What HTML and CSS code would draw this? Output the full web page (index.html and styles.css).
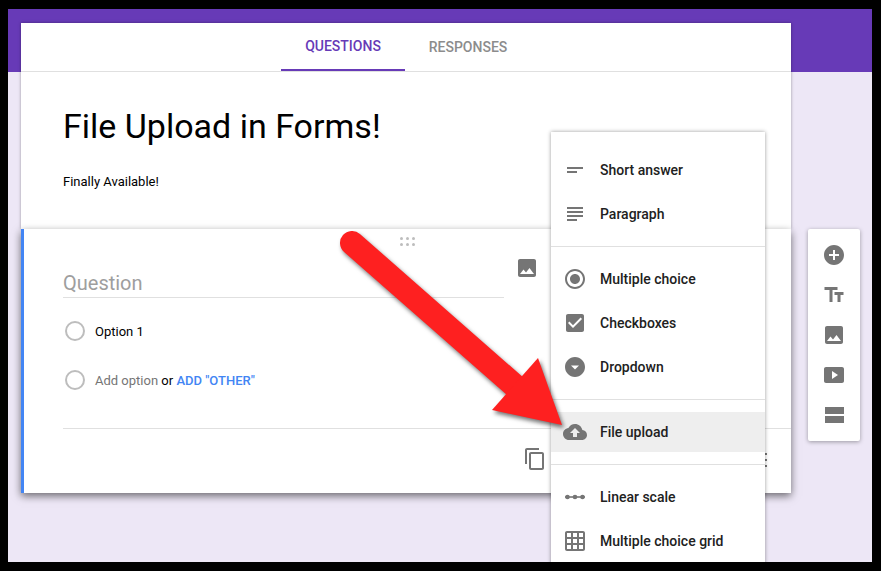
FILE: index.html
```html
<!DOCTYPE html>
<html lang="en">
<head>
  <meta charset="UTF-8">
  <meta name="viewport" content="width=device-width, initial-scale=1.0">
  <title>File Upload in Forms!</title>
  <link rel="stylesheet" href="styles.css">
</head>
<body>
  <svg class="defs" width="0" height="0">
    <symbol id="i-image" viewBox="0 0 24 24"><path d="M21 19V5c0-1.1-.9-2-2-2H5c-1.1 0-2 .9-2 2v14c0 1.100.9 2 2 2h14c1.100 0 2-.9 2-2zM8.500 13.500l2.500 3.010L14.500 12l4.500 6H5l3.500-4.500z"/></symbol>
  </svg>

  <div class="screen">
    <div class="layout">
      <main class="column">
        <section class="form-head">
          <nav class="tabs">
            <a class="tab active">QUESTIONS</a>
            <a class="tab">RESPONSES</a>
          </nav>
          <div class="form-title">
            <h1>File Upload in Forms!</h1>
            <p>Finally Available!</p>
          </div>
        </section>

        <section class="question-card">
          <div class="drag-handle"><i></i><i></i><i></i><i></i><i></i><i></i></div>
          <div class="question-row">
            <div class="question-input">Question</div>
            <svg class="icon"><use href="#i-image"/></svg>
          </div>
          <div class="option first"><span class="radio"></span><span>Option 1</span></div>
          <div class="option"><span class="radio"></span><span><span class="muted">Add option</span> or <a class="link">ADD "OTHER"</a></span></div>
          <div class="card-footer">
            <svg class="icon copy" viewBox="0 0 24 24"><path d="M16 1H4c-1.100 0-2 .9-2 2v14h2V3h12V1zm3 4H8c-1.100 0-2 .9-2 2v14c0 1.100.9 2 2 2h11c1.100 0 2-.9 2-2V7c0-1.100-.9-2-2-2zm0 16H8V7h11v14z"/></svg>
            <span class="more"><i></i><i></i><i></i></span>
          </div>
        </section>
      </main>

      <aside class="toolbar">
        <svg class="icon" viewBox="0 0 24 24"><path d="M12 2C6.480 2 2 6.480 2 12s4.480 10 10 10 10-4.480 10-10S17.520 2 12 2zm5 11h-4v4h-2v-4H7v-2h4V7h2v4h4v2z"/></svg>
        <svg class="icon" viewBox="0 0 24 24"><path d="M2.500 4v3h5v12h3V7h5V4h-13zm19 5h-9v3h3v7h3v-7h3V9z"/></svg>
        <svg class="icon"><use href="#i-image"/></svg>
        <svg class="icon" viewBox="0 0 24 24"><path fill-rule="evenodd" d="M20 4H4c-1.100 0-2 .9-2 2v12c0 1.100.9 2 2 2h16c1.100 0 2-.9 2-2V6c0-1.100-.9-2-2-2zm-10 12V8l6 4-6 4z"/></svg>
        <svg class="icon" viewBox="0 0 24 24"><path d="M3 4h19v7H3zM3 13h19v7H3z"/></svg>
      </aside>
    </div>

    <div class="type-menu">
      <div class="menu-group top">
        <div class="menu-item">
          <svg class="icon" viewBox="0 0 24 24"><path d="M4 9h16v2H4zm0 4h10v2H4z"/></svg>Short answer
        </div>
        <div class="menu-item">
          <svg class="icon" viewBox="0 0 24 24"><path d="M14 17H4v2h10v-2zm6-8H4v2h16V9zM4 15h16v-2H4v2zM4 5v2h16V5H4z"/></svg>Paragraph
        </div>
      </div>
      <div class="menu-group">
        <div class="menu-item">
          <svg class="icon" viewBox="0 0 24 24"><path d="M12 7c-2.760 0-5 2.240-5 5s2.240 5 5 5 5-2.240 5-5-2.240-5-5-5zm0-5C6.480 2 2 6.480 2 12s4.480 10 10 10 10-4.480 10-10S17.520 2 12 2zm0 18c-4.420 0-8-3.580-8-8s3.580-8 8-8 8 3.580 8 8-3.580 8-8 8z"/></svg>Multiple choice
        </div>
        <div class="menu-item">
          <svg class="icon" viewBox="0 0 24 24"><path d="M19 3H5c-1.110 0-2 .9-2 2v14c0 1.100.89 2 2 2h14c1.110 0 2-.9 2-2V5c0-1.100-.89-2-2-2zm-9 14l-5-5 1.410-1.410L10 14.170l7.590-7.590L19 8l-9 9z"/></svg>Checkboxes
        </div>
        <div class="menu-item">
          <svg class="icon" viewBox="0 0 24 24"><path fill-rule="evenodd" d="M12 2C6.480 2 2 6.480 2 12s4.480 10 10 10 10-4.480 10-10S17.520 2 12 2zM8 10.500h8l-4 4z"/></svg>Dropdown
        </div>
      </div>
      <div class="menu-group">
        <div class="menu-item selected">
          <svg class="icon" viewBox="0 0 24 24"><path d="M19.350 10.040C18.670 6.590 15.640 4 12 4 9.110 4 6.600 5.640 5.350 8.040 2.340 8.360 0 10.910 0 14c0 3.310 2.690 6 6 6h13c2.760 0 5-2.240 5-5 0-2.640-2.050-4.780-4.650-4.960zM14 13v4h-4v-4H7l5-5 5 5h-3z"/></svg>File upload
        </div>
      </div>
      <div class="menu-group last">
        <div class="menu-item">
          <svg class="icon" viewBox="0 0 24 24"><path d="M2 11.200h20v1.600H2z"/><circle cx="4.500" cy="12" r="2.300"/><circle cx="12" cy="12" r="2.300"/><circle cx="19.500" cy="12" r="2.300"/></svg>Linear scale
        </div>
        <div class="menu-item">
          <svg class="icon" viewBox="0 0 24 24"><path d="M20 2H4c-1.100 0-2 .9-2 2v16c0 1.100.9 2 2 2h16c1.100 0 2-.9 2-2V4c0-1.100-.9-2-2-2zM8 20H4v-4h4v4zm0-6H4v-4h4v4zm0-6H4V4h4v4zm6 12h-4v-4h4v4zm0-6h-4v-4h4v4zm0-6h-4V4h4v4zm6 12h-4v-4h4v4zm0-6h-4v-4h4v4zm0-6h-4V4h4v4z"/></svg>Multiple choice grid
        </div>
      </div>
    </div>

    <!-- red annotation arrow, coordinates are the screenshot's -->
    <svg class="arrow" viewBox="8 9 864 553">
      <path d="M352 243 L524 394" stroke="#fe2020" stroke-width="24" stroke-linecap="round" fill="none"/>
      <path d="M538 358 L562 425 L492 410 Z" fill="#fe2020"/>
    </svg>
  </div>
</body>
</html>
```

FILE: styles.css
```css
* {
  box-sizing: border-box;
}
html, body {
  margin: 0;
  padding: 0;
  background: #000;
}
body {
  width: 881px;
  height: 571px;
  padding: 9px 9px 9px 8px;
  overflow: hidden;
  font-family: Roboto, "Liberation Sans", sans-serif;
  color: #000;
}
.defs {
  position: absolute;
}
.icon {
  width: 24px;
  height: 24px;
  fill: #757575;
  flex: none;
}

.screen {
  position: relative;
  width: 864px;
  height: 553px;
  overflow: hidden;
  background: linear-gradient(#673ab7 63px, #ede7f6 63px);
}
.layout {
  display: flex;
  align-items: flex-start;
  padding: 14px 0 0 13px;
}
.column {
  width: 770px;
}

.form-head {
  height: 206px;
  background: #fff;
  box-shadow: 0 0 3px rgba(0, 0, 0, 0.35);
}
.tabs {
  display: flex;
  justify-content: center;
  height: 49px;
  border-bottom: 1px solid #e0e0e0;
}
.tab {
  display: flex;
  align-items: center;
  justify-content: center;
  width: 126px;
  height: 48px;
  font-size: 14px;
  font-weight: 500;
  color: #8c8c8c;
}
.tab.active {
  width: 124px;
  color: #673ab7;
  border-bottom: 2px solid #673ab7;
}
.form-title {
  padding: 34px 42px 0;
}
.form-title h1 {
  margin: 0;
  font-size: 34px;
  line-height: 40px;
  font-weight: 400;
}
.form-title p {
  margin: 27px 0 0;
  font-size: 13px;
  line-height: 18px;
}

.question-card {
  height: 264px;
  background: #fff;
  border-left: 3px solid #4285f4;
  box-shadow: 0 3px 8px rgba(0, 0, 0, 0.55);
  position: relative;
}
.drag-handle {
  display: grid;
  grid-template-columns: repeat(3, 3px);
  grid-auto-rows: 3px;
  gap: 3px;
  justify-content: center;
  align-content: start;
  height: 27px;
  padding-top: 8px;
}
.drag-handle i {
  width: 3px;
  height: 3px;
  border-radius: 50%;
  background: #bdbdbd;
}
.question-row {
  display: flex;
  align-items: flex-start;
  gap: 11px;
  padding-left: 39px;
}
.question-input {
  width: 441px;
  height: 42px;
  padding-top: 13px;
  font-size: 20px;
  line-height: 28px;
  color: #9e9e9e;
  border-bottom: 1px solid #e0e0e0;
}
.option {
  display: flex;
  align-items: center;
  height: 20px;
  margin: 29px 0 0 41px;
  font-size: 13px;
}
.option.first {
  margin-top: 23px;
}
.radio {
  width: 20px;
  height: 20px;
  margin-right: 10px;
  border: 2px solid #bdbdbd;
  border-radius: 50%;
}
.muted {
  color: #757575;
}
.link {
  font-weight: 500;
  color: #4285f4;
}
.card-footer {
  display: flex;
  align-items: flex-start;
  height: 65px;
  margin: 38px 0 0 39px;
  padding: 18px 0 0 459px;
  border-top: 1px solid #e0e0e0;
}
.copy {
  margin-left: 1px;
}
.more {
  display: grid;
  gap: 4px;
  margin: 6px 0 0 218px;
}
.more i {
  width: 2px;
  height: 2px;
  background: #757575;
}

.toolbar {
  display: flex;
  flex-direction: column;
  align-items: center;
  gap: 16px;
  width: 52px;
  margin: 206px 0 0 17px;
  padding: 14px 0;
  background: #fff;
  border-radius: 2px;
  box-shadow: 0 1px 4px rgba(0, 0, 0, 0.35);
}

.type-menu {
  position: absolute;
  left: 543px;
  top: 123px;
  width: 214px;
  background: #fff;
  box-shadow: 0 0 4px rgba(0, 0, 0, 0.4);
}
.menu-group {
  padding: 10px 0;
  border-bottom: 1px solid #e0e0e0;
}
.menu-group.top {
  padding-top: 16px;
}
.menu-group.last {
  border-bottom: 0;
}
.menu-item {
  display: flex;
  align-items: center;
  gap: 13px;
  height: 44px;
  padding-left: 12px;
  font-size: 14px;
  font-weight: 500;
  color: #212121;
}
.menu-item.selected {
  height: 40px;
  margin: 2px 0;
  background: #eeeeee;
}

.arrow {
  position: absolute;
  left: 0;
  top: 0;
  width: 864px;
  height: 553px;
  filter: drop-shadow(2px 3px 2px rgba(0, 0, 0, 0.55));
}
```
